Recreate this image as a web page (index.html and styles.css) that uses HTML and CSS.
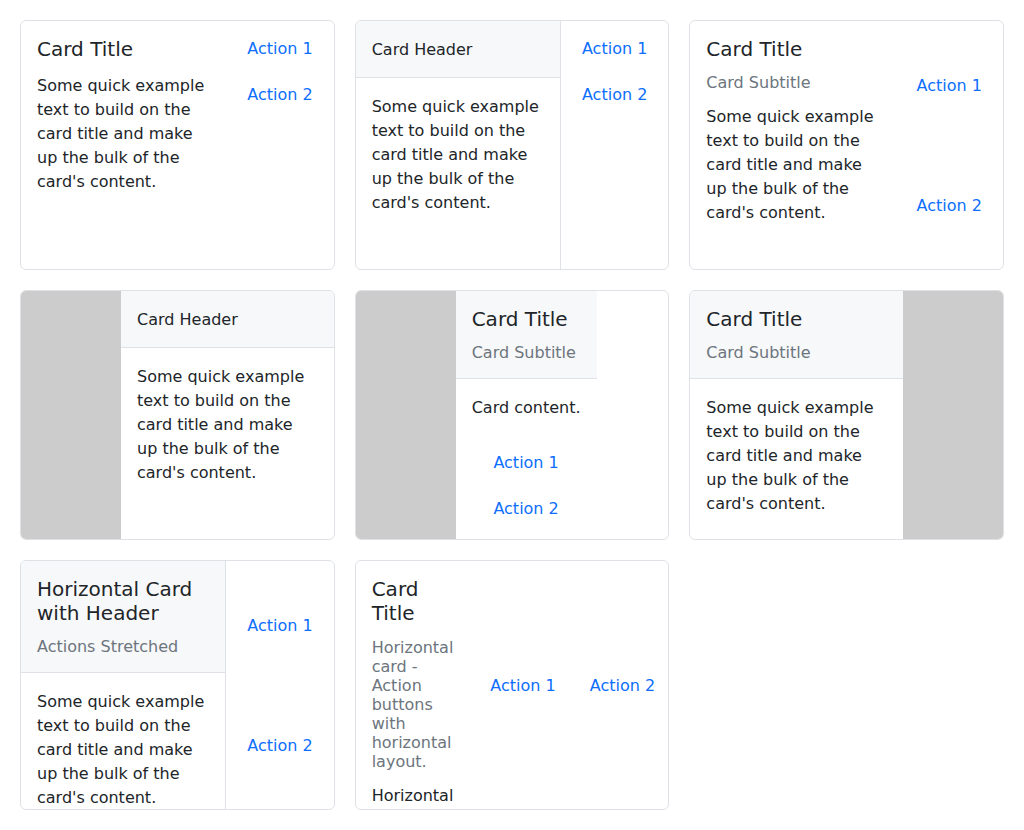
FILE: index.html
```html
<!DOCTYPE html>
<html lang="en">
<head>
<meta charset="utf-8">
<title>Cards</title>
<link rel="stylesheet" href="styles.css">
</head>
<body>
<div class="grid">

  <div class="card">
    <div class="col grow">
      <div class="card-body titled">
        <div class="heading solo">
          <h5 class="title">Card Title</h5>
        </div>
        <p class="text">Some quick example text to build on the card title and make up the bulk of the card's content.</p>
      </div>
    </div>
    <div class="actions">
      <a class="btn" href="#">Action 1</a>
      <a class="btn" href="#">Action 2</a>
    </div>
  </div>

  <div class="card">
    <div class="col grow">
      <div class="card-header">Card Header</div>
      <div class="card-body">
        <p class="text">Some quick example text to build on the card title and make up the bulk of the card's content.</p>
      </div>
    </div>
    <div class="actions bordered">
      <a class="btn" href="#">Action 1</a>
      <a class="btn" href="#">Action 2</a>
    </div>
  </div>

  <div class="card">
    <div class="col grow">
      <div class="card-body titled">
        <div class="heading">
          <h5 class="title">Card Title</h5>
          <h6 class="subtitle">Card Subtitle</h6>
        </div>
        <p class="text">Some quick example text to build on the card title and make up the bulk of the card's content.</p>
      </div>
    </div>
    <div class="actions stretch">
      <a class="btn" href="#">Action 1</a>
      <a class="btn" href="#">Action 2</a>
    </div>
  </div>

  <div class="card">
    <div class="img"></div>
    <div class="col grow">
      <div class="card-header">Card Header</div>
      <div class="card-body">
        <p class="text">Some quick example text to build on the card title and make up the bulk of the card's content.</p>
      </div>
    </div>
  </div>

  <div class="card">
    <div class="img"></div>
    <div class="col fit">
      <div class="card-header titled">
        <h5 class="title">Card Title</h5>
        <h6 class="subtitle">Card Subtitle</h6>
      </div>
      <div class="card-body">
        <p class="text">Card content.</p>
      </div>
      <div class="actions centered">
        <a class="btn" href="#">Action 1</a>
        <a class="btn" href="#">Action 2</a>
      </div>
    </div>
  </div>

  <div class="card">
    <div class="col grow">
      <div class="card-header titled">
        <h5 class="title">Card Title</h5>
        <h6 class="subtitle">Card Subtitle</h6>
      </div>
      <div class="card-body">
        <p class="text">Some quick example text to build on the card title and make up the bulk of the card's content.</p>
      </div>
    </div>
    <div class="img"></div>
  </div>

  <div class="card">
    <div class="col grow">
      <div class="card-header titled">
        <h5 class="title">Horizontal Card with Header</h5>
        <h6 class="subtitle">Actions Stretched</h6>
      </div>
      <div class="card-body">
        <p class="text">Some quick example text to build on the card title and make up the bulk of the card's content.</p>
      </div>
    </div>
    <div class="actions bordered stretch">
      <a class="btn" href="#">Action 1</a>
      <a class="btn" href="#">Action 2</a>
    </div>
  </div>

  <div class="card">
    <div class="col grow">
      <div class="card-body titled">
        <h5 class="title">Card Title</h5>
        <p class="subtitle compact">Horizontal card - Action buttons with horizontal layout.</p>
        <p class="text">Horizontal card content.</p>
      </div>
    </div>
    <div class="actions row">
      <a class="btn" href="#">Action 1</a>
      <a class="btn" href="#">Action 2</a>
    </div>
  </div>

</div>
</body>
</html>
```

FILE: styles.css
```css
* { box-sizing: border-box; }

body {
  margin: 0;
  padding: 20px;
  font-family: "DejaVu Sans", "Noto Sans", sans-serif;
  font-size: 16px;
  line-height: 24px;
  color: #212529;
  background: #fff;
}

.grid {
  display: grid;
  grid-template-columns: repeat(3, 1fr);
  grid-auto-rows: 250px;
  gap: 20px;
}

.card {
  display: flex;
  border: 1px solid #dee2e6;
  border-radius: 6px;
  overflow: hidden;
  background: #fff;
}

.col {
  display: flex;
  flex-direction: column;
}

.col.grow { flex: 1 1 auto; }
.col.fit { flex: 0 0 auto; }

.img {
  flex: none;
  width: 100px;
  background: #cccccc;
}

.card-header {
  padding: 17px 16px 15px;
  background: #f7f8f9;
  border-bottom: 1px solid #dee2e6;
}

.card-header.titled {
  padding: 16px 16px 13px;
}

.card-body {
  padding: 17px 16px 15px;
}

.card-body.titled {
  padding: 16px;
}

.heading {
  margin-bottom: 10px;
}

.heading.solo {
  margin-bottom: 13px;
}

.title {
  margin: 0;
  font-size: 20px;
  line-height: 24px;
  font-weight: normal;
}

.subtitle {
  margin: 10px 0 0;
  font-size: 16px;
  line-height: 24px;
  font-weight: normal;
  color: #6c757d;
}

.subtitle.compact {
  margin: 13px 0 13px;
  line-height: 19px;
}

.text {
  margin: 0;
}

.actions {
  flex: none;
  display: flex;
  flex-direction: column;
  gap: 8px;
  padding: 8px;
}

.actions.bordered {
  border-left: 1px solid #dee2e6;
}

.actions.centered {
  align-items: center;
  padding-top: 8px;
}

.actions.row {
  flex-direction: row;
  align-self: center;
}

.btn {
  display: inline-block;
  padding: 7px 12px 5px;
  border: 1px solid transparent;
  line-height: 24px;
  color: #0d6efd;
  text-decoration: none;
  white-space: nowrap;
  text-align: center;
}

.actions.stretch .btn {
  flex: 1 1 0;
  display: flex;
  align-items: center;
  justify-content: center;
}
```
